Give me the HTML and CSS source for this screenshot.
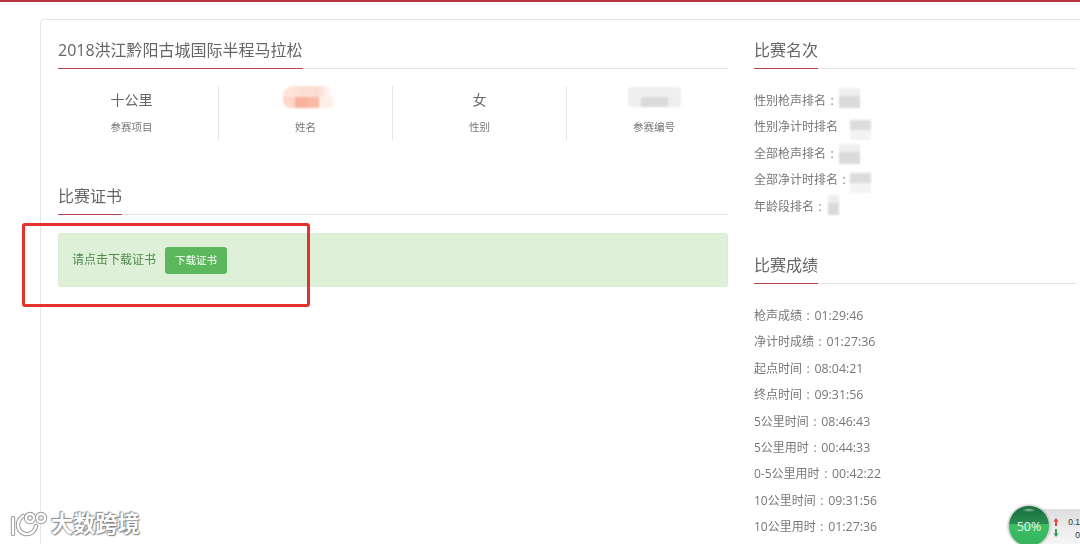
FILE: index.html
```html
<!DOCTYPE html>
<html lang="zh-CN">
<head>
<meta charset="utf-8">
<title>比赛证书</title>
<link rel="stylesheet" href="styles.css">
</head>
<body>
<div class="topbar"></div>
<main class="page">
  <div class="card">
    <section class="left">
      <h2 class="heading"><span>2018洪江黔阳古城国际半程马拉松</span></h2>
      <div class="stats">
        <div class="stat"><div class="stat-value">十公里</div><div class="stat-label">参赛项目</div></div>
        <div class="stat"><div class="stat-value"><i class="blur blur-name"></i></div><div class="stat-label">姓名</div></div>
        <div class="stat"><div class="stat-value">女</div><div class="stat-label">性别</div></div>
        <div class="stat"><div class="stat-value"><i class="blur blur-number"></i></div><div class="stat-label">参赛编号</div></div>
      </div>
      <h2 class="heading heading-cert"><span>比赛证书</span></h2>
      <div class="alert">
        <span class="alert-text">请点击下载证书</span>
        <a class="btn">下载证书</a>
      </div>
    </section>
    <aside class="right">
      <h2 class="heading"><span>比赛名次</span></h2>
      <ul class="rows rows-rank">
        <li>性别枪声排名 : <i class="blur blur-rank r1"></i></li>
        <li>性别净计时排名 <i class="blur blur-rank blur-low r2"></i></li>
        <li>全部枪声排名 : <i class="blur blur-rank r3"></i></li>
        <li>全部净计时排名 : <i class="blur blur-rank blur-low r4"></i></li>
        <li>年龄段排名 : <i class="blur blur-rank blur-thin r5"></i></li>
      </ul>
      <h2 class="heading heading-results"><span>比赛成绩</span></h2>
      <ul class="rows">
        <li>枪声成绩 : <span class="time">01:29:46</span></li>
        <li>净计时成绩 : <span class="time">01:27:36</span></li>
        <li>起点时间 : <span class="time">08:04:21</span></li>
        <li>终点时间 : <span class="time">09:31:56</span></li>
        <li>5公里时间 : <span class="time">08:46:43</span></li>
        <li>5公里用时 : <span class="time">00:44:33</span></li>
        <li>0-5公里用时 : <span class="time">00:42:22</span></li>
        <li>10公里时间 : <span class="time">09:31:56</span></li>
        <li>10公里用时 : <span class="time">01:27:36</span></li>
      </ul>
    </aside>
  </div>
</main>

<div class="annotation"></div>

<div class="watermark">
  <svg class="wm-logo" width="40" height="26" viewBox="0 0 40 26" aria-hidden="true">
    <g fill="none" stroke="#9a9a9a" stroke-width="4.4" stroke-linecap="round">
      <path d="M4 7V23"/><path d="M14 5C7 10 7 20 16 23C22 24 26 20 27 15"/>
      <circle cx="21" cy="7" r="4"/><circle cx="32" cy="7" r="4"/>
    </g>
    <g fill="none" stroke="#fff" stroke-width="2.4" stroke-linecap="round">
      <path d="M4 7V23"/><path d="M14 5C7 10 7 20 16 23C22 24 26 20 27 15"/>
      <circle cx="21" cy="7" r="4"/><circle cx="32" cy="7" r="4"/>
    </g>
  </svg>
  <span class="wm-text">大数跨境</span>
</div>

<div class="speed">
  <div class="speed-panel">
    <svg class="speed-arrows" width="6" height="28" viewBox="0 0 6 28" aria-hidden="true">
      <path d="M3 4L5.6 7.5H4V12H2V7.5H.4Z" fill="#d9473f"/>
      <path d="M3 23L.4 19.5H2V15H4V19.5H5.6Z" fill="#3f9a55"/>
    </svg>
    <div class="speed-nums"><span>0.1</span><span>0</span></div>
  </div>
  <div class="speed-ball"><span>50%</span></div>
</div>
</body>
</html>
```
FILE: styles.css
```css
* { box-sizing: border-box; }
html, body { margin: 0; height: 544px; overflow: hidden; }
body {
  position: relative;
  background: #fff;
  color: #666;
  font-family: "Open Sans", "Noto Sans CJK SC", sans-serif;
  font-size: 12px;
}
.topbar { height: 2px; background: #b8323f; }
.page { padding: 17px 0 0 40px; filter: blur(0.3px); }
.card {
  display: grid;
  grid-template-columns: 670px 322px;
  column-gap: 26px;
  width: 1060px;
  height: 600px;
  padding: 16px 0 0 17px;
  border: 1px solid #e6e6e6;
  border-radius: 4px;
  background: #fff;
}
.heading {
  height: 33px;
  margin: 0;
  border-bottom: 1px solid #e4e4e4;
  font-size: 16px;
  font-weight: 400;
  line-height: 28px;
  color: #666;
}
.heading span {
  display: inline-block;
  height: 33px;
  border-bottom: 1px solid #b8474f;
  white-space: nowrap;
}
.stats {
  display: grid;
  grid-template-columns: repeat(4, 174px);
  margin: 17px 0 0 -13px;
}
.stat {
  height: 54px;
  border-right: 1px solid #e6e6e6;
  text-align: center;
}
.stat:last-child { border-right: 0; }
.stat-value {
  display: flex;
  justify-content: center;
  align-items: center;
  height: 26px;
  font-size: 14px;
  color: #666;
}
.stat-label { margin-top: 7px; font-size: 10.5px; line-height: 16px; color: #777; }
.heading-cert { margin-top: 42px; }
.alert {
  display: flex;
  align-items: center;
  gap: 9px;
  height: 54px;
  margin-top: 18px;
  padding: 0 13px;
  border: 1px solid #d9ecd0;
  border-radius: 3px;
  background: #dff0d8;
  color: #4f8a4c;
}
.alert-text { padding-bottom: 3px; }
.btn {
  display: block;
  width: 62px;
  height: 27px;
  border-radius: 3px;
  background: #5cb85c;
  color: #fff;
  font-size: 10.5px;
  line-height: 27px;
  text-align: center;
}
.rows { margin: 19px 0 0; padding: 0; list-style: none; }
.rows li {
  height: 26.4px;
  line-height: 26.4px;
  color: #777;
  white-space: nowrap;
  word-spacing: 1.5px;
}
.time { font-size: 12.4px; }
.heading-results { margin-top: 31px; }
.blur { display: inline-block; }
.blur-name {
  width: 50px;
  height: 22px;
  margin: -4px 0 0 4px;
  border-radius: 10px 6px 0 8px;
  background:
    linear-gradient(90deg, #fcd6c8 0 25%, #f9b29b 25% 50%, #fbb9a4 50% 72%, #fdeee8 72% 100%) bottom / 100% 50% no-repeat,
    linear-gradient(90deg, #fde4da 0, #fcdcd0 70%, #fff 100%);
  filter: blur(1px);
}
.blur-number {
  width: 53px;
  height: 20px;
  margin-top: -4px;
  border-radius: 4px;
  background:
    linear-gradient(90deg, #eee 0 25%, #dadada 25% 75%, #eee 75%) bottom / 100% 50% no-repeat,
    #efefef;
  filter: blur(1px);
}
.blur-rank {
  position: relative;
  width: 21px;
  height: 20px;
  vertical-align: middle;
  background: linear-gradient(#eeeeee 0 40%, #dadada 40% 100%);
  filter: blur(1px);
}
.blur-low { background: linear-gradient(#dcdcdc 0 50%, #f3f3f3 50% 100%); }
.blur-thin { width: 11px; }
.r1 { top: -4px; margin-left: 1px; }
.r2 { top: 2px; margin-left: 7px; }
.r3 { top: -1px; margin-left: 1px; }
.r4 { top: 2px; }
.r5 { top: -2px; margin-left: 2px; }
.annotation {
  position: absolute;
  left: 22px;
  top: 223px;
  width: 288px;
  height: 84px;
  border: 3px solid #e5322d;
  border-radius: 3px;
}
.watermark {
  position: absolute;
  left: 9px;
  top: 510px;
  display: flex;
  align-items: center;
  gap: 2px;
}
.wm-text {
  font-size: 22.2px;
  line-height: 28px;
  font-weight: 700;
  color: #fff;
  text-shadow: 0 0 2px #777, 1px 1px 1px #888, -1px -1px 1px #999;
}
.speed { position: absolute; left: 1008px; top: 505px; width: 72px; height: 39px; }
.speed-panel {
  position: absolute;
  left: 30px;
  top: 4px;
  display: flex;
  gap: 4px;
  width: 42px;
  height: 35px;
  padding: 5px 0 0 15px;
  border-radius: 3px 0 0 0;
  background: linear-gradient(#dedede, #f6f6f6);
}
.speed-nums {
  display: flex;
  flex-direction: column;
  align-items: flex-end;
  width: 21px;
  padding-top: 2px;
  font: 400 8.5px/13px "Liberation Sans", sans-serif;
  color: #333;
}
.speed-arrows { flex: none; }
.speed-ball {
  position: absolute;
  left: 0;
  top: 0;
  display: flex;
  justify-content: center;
  align-items: center;
  width: 42px;
  height: 42px;
  border: 1.5px solid #c9d3cd;
  border-radius: 50%;
  background:
    radial-gradient(ellipse 7px 2px at 50% 4px, rgba(255, 255, 255, .55), transparent),
    linear-gradient(#16703c 0, #2a8a50 44%, #3cc166 46%, #35b25d 100%);
  box-shadow: 0 0 2px #999;
  color: #e8f5ea;
  font: 12.5px "Open Sans", sans-serif;
}
```
